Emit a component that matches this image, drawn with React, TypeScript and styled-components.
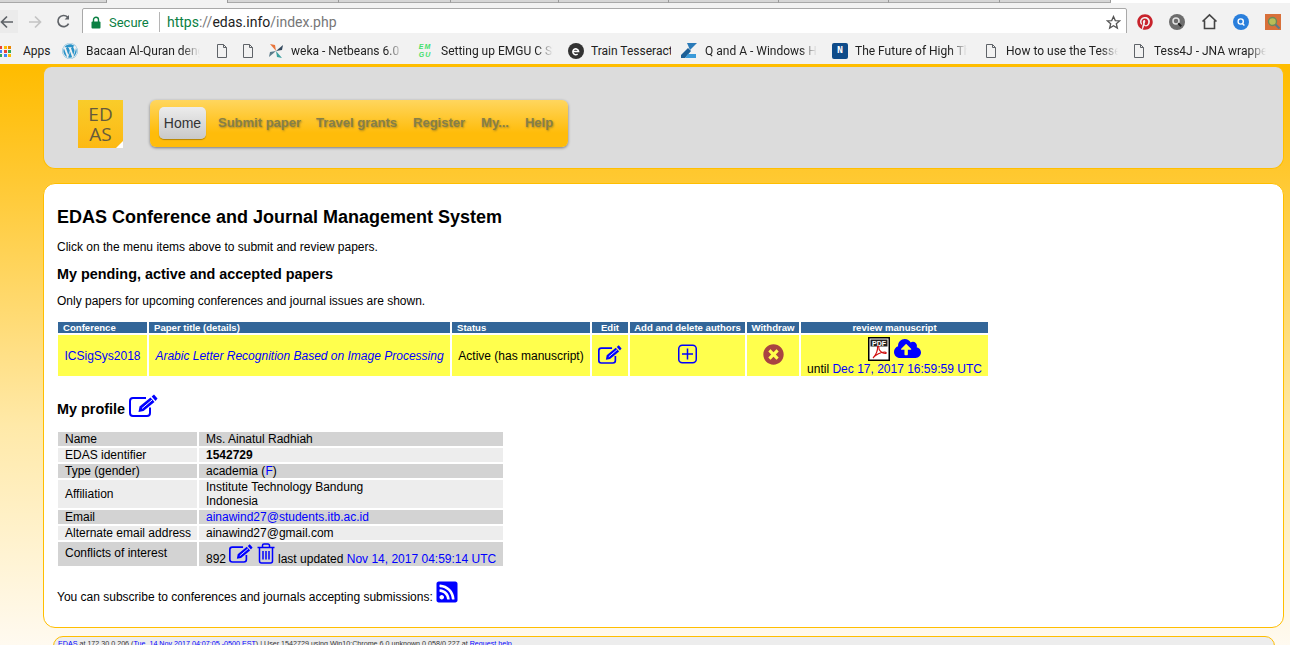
import React from 'react';
import styled, { createGlobalStyle } from 'styled-components';
import { FaTimesCircle, FaCloudUploadAlt, FaRssSquare, FaPinterest, FaWordpress } from 'react-icons/fa';

const Global = createGlobalStyle`
  html, body { margin: 0; padding: 0; height: 100%; overflow: hidden; background: #fff; }
  body { font-family: "Liberation Sans", Arial, sans-serif; font-size: 12px; color: #000; }
  * { box-sizing: border-box; }
  a { color: #0000ff; text-decoration: none; }
`;

const Shell = styled.div`
  width: 1290px; height: 645px; overflow: hidden; display: flex; flex-direction: column;
`;
const TabStrip = styled.div`
  height: 3px; display: flex; flex: none; background: #fff;
`;
const Tab = styled.div<{ $w: number; $active?: boolean }>`
  width: ${p => p.$w}px; height: 3px; flex: none;
  background: ${p => (p.$active ? '#f2f2f2' : '#d6d6d6')};
  border-right: 1px solid #9a9a9a;
  border-bottom: ${p => (p.$active ? '0' : '1px solid #a8a8a8')};
`;
const Toolbar = styled.div`
  height: 30px; flex: none; background: #f2f2f2; display: flex; align-items: center; padding-top: 7px;
`;
const NavBtn = styled.div<{ $w: number; $hover?: boolean }>`
  width: ${p => p.$w}px; height: 23px; flex: none; display: flex; align-items: center;
  justify-content: ${p => (p.$hover ? 'flex-start' : 'center')};
  background: ${p => (p.$hover ? '#ebebeb' : 'transparent')};
`;
const Address = styled.div`
  width: 1045px; height: 27px; margin-left: 8px; flex: none; background: #fff; border: 1px solid #a9a9a9; border-radius: 2px;
  display: flex; align-items: center; padding: 1px 0 0 8px; font-family: Roboto, "Open Sans", sans-serif; font-size: 14px;
`;
const Secure = styled.span`
  color: #0b8043; margin-left: 8px; width: 50px; flex: none; font-size: 13px;
`;
const Sep = styled.span`
  width: 1px; height: 20px; background: #b5b5b5; flex: none; margin-right: 7px;
`;
const UrlGreen = styled.span`color: #0b8043;`;
const UrlGray = styled.span`color: #777;`;
const UrlDark = styled.span`color: #222;`;
const StarSlot = styled.div`
  margin-left: auto; margin-right: 5px; display: flex;
`;
const Extensions = styled.div`
  display: flex; align-items: center; margin-left: 2px;
`;
const ExtSlot = styled.div`
  width: 32px; display: flex; justify-content: center; align-items: center; flex: none;
`;
const Bookmarks = styled.div`
  height: 33px; flex: none; background: #f2f2f2; display: flex; align-items: center; padding-top: 5px;
  font-family: Roboto, "Open Sans", sans-serif; font-size: 12px; color: #222;
  border-bottom: 2px solid #ffbe00;
`;
const Mark = styled.div<{ $ml: number }>`
  display: flex; align-items: center; margin-left: ${p => p.$ml}px; flex: none;
`;
const MarkIcon = styled.div<{ $w?: number; $gap?: number }>`
  width: ${p => p.$w ?? 16}px; height: 16px; flex: none; margin-right: ${p => p.$gap ?? 7}px; display: flex; align-items: center; justify-content: center;
`;
const MarkText = styled.span<{ $w: number; $fade?: boolean }>`
  width: ${p => p.$w}px; white-space: nowrap; overflow: hidden; flex: none;
  ${p => (p.$fade ? 'mask-image: linear-gradient(to right, #000 85%, transparent 100%);' : '')}
`;
const EmguLogo = styled.span`
  font: italic bold 7px/8px "Liberation Sans", sans-serif; color: #3fe06a; letter-spacing: 1px; text-align: center; width: 16px;
`;
const NBadge = styled.span`
  width: 16px; height: 16px; background: #0f4c8a; color: #fff; border-radius: 2px; font: bold 10px/16px "Liberation Mono", monospace; text-align: center;
`;
const Page = styled.div`
  flex: 1; min-height: 0; background: linear-gradient(to bottom, #ffbc00 0%, #ffc933 20%, #ffe9a8 62%, #fffaf0 100%);
  padding: 1px 6px 0 43px; overflow: hidden;
`;
const HeaderPanel = styled.div`
  height: 102px; background: #dcdcdc; border: 1px solid #ffbe00; border-top: 0; border-radius: 8px 8px 12px 12px;
  display: flex; align-items: flex-start; padding: 33px 0 0 34px;
`;
const Logo = styled.div`
  width: 45px; height: 48px; background: linear-gradient(to bottom, #f9cc2a, #fdb913); color: #655a3c; position: relative;
  font: 19px/20px "Open Sans", sans-serif; text-align: center; padding-top: 4px; flex: none;
  &::after { content: ''; position: absolute; right: 0; bottom: 0; width: 0; height: 0; border-style: solid; border-width: 0 0 7px 7px; border-color: transparent transparent #fff transparent; }
`;
const Menu = styled.div`
  margin-left: 27px; height: 47px; width: 418px; flex: none; display: flex; align-items: center; padding-left: 9px; border-radius: 6px;
  background: linear-gradient(to bottom, #ffd65e, #ffbc0a 70%);
  box-shadow: 0 1px 3px rgba(0,0,0,.45);
`;
const Home = styled.div`
  width: 47px; height: 32px; border-radius: 5px; background: linear-gradient(to bottom, #ececec, #c9c9c9);
  box-shadow: 0 1px 1px rgba(0,0,0,.3); display: flex; align-items: center; justify-content: center; font-size: 14px; color: #333; margin-right: 12px; margin-top: -1px;
`;
const MenuItem = styled.span<{ $mr: number }>`
  font-weight: bold; font-size: 13px; color: #867f48; text-shadow: 1px 1px 2px rgba(120,100,40,.6); margin-right: ${p => p.$mr}px; margin-top: -2px; white-space: nowrap;
`;
const MainPanel = styled.div`
  height: 445px; margin-top: 14px; background: #fff; border: 1px solid #ffbe00; border-radius: 12px; padding: 22px 13px 0;
`;
const Title = styled.h1`
  margin: 0 0 12px; font-size: 18px; line-height: 22px; font-weight: bold;
`;
const Para = styled.p<{ $mb?: number }>`
  margin: 0 0 ${p => p.$mb ?? 0}px; font-size: 12px; line-height: 14px;
`;
const Sub = styled.h2`
  margin: 12px 0 11px; font-size: 14.4px; line-height: 17px; font-weight: bold;
`;
const PapersTable = styled.table`
  border-collapse: separate; border-spacing: 2px; table-layout: fixed; width: 934px; margin: 0 0 0 -1px;
`;
const Th = styled.th<{ $center?: boolean }>`
  background: #336699; color: #fff; font-size: 9.6px; line-height: 11px; height: 11px; padding: 0 0 0 ${p => (p.$center ? 0 : 5)}px; text-align: ${p => (p.$center ? 'center' : 'left')}; white-space: nowrap; font-weight: bold;
`;
const Td = styled.td`
  background: #ffff4d; height: 41px; padding: 0; text-align: center; white-space: nowrap; line-height: 14px; vertical-align: middle;
`;
const Italic = styled.a`font-style: italic;`;
const IconRow = styled.div`
  display: flex; justify-content: center; align-items: flex-end; gap: 4px; height: 25px; margin-bottom: 1px;
`;
const ProfileHead = styled.h2`
  margin: 15px 0 15px; font-size: 14.4px; line-height: 24px; font-weight: bold; display: flex; align-items: flex-end; gap: 4px; height: 24px;
`;
const ProfileLabel = styled.span`position: relative; top: 4px;`;
const ProfileTable = styled.table`
  border-collapse: separate; border-spacing: 2px; table-layout: fixed; width: 449px; margin: -2px 0 0 -1px;
`;
const PCell = styled.td<{ $alt?: boolean; $h?: number; $up?: boolean }>`
  background: ${p => (p.$alt ? '#ededed' : '#d3d3d3')}; padding: ${p => (p.$up ? '0 0 2px 7px' : '0 0 0 7px')}; line-height: 14px; height: ${p => p.$h ?? 14}px; white-space: nowrap; vertical-align: middle;
`;
const CoiLine = styled.div`
  display: flex; align-items: flex-end; height: 24px; padding-bottom: 0;
`;
const CoiIcons = styled.span`
  display: inline-flex; align-items: flex-start; gap: 4px; margin: 0 3px 0 3px; height: 23px;
`;
const Subscribe = styled.div`
  margin-top: 13px; display: flex; align-items: flex-end; gap: 2px; line-height: 14px; height: 23px;
`;
const FooterBar = styled.div`
  height: 40px; margin: 8px 0 0 10px; background: #ededed; border: 1px solid #ffbe00; border-radius: 10px 10px 0 0; padding: 3px 0 0 4px;
  font-size: 7.15px; line-height: 9px; color: #333; white-space: nowrap; overflow: hidden; width: 1222px;
`;

const File = () => (
  <svg width="12" height="14" viewBox="0 0 12 14" fill="none" stroke="#5f6368" strokeWidth="1"><path d="M1.5.5h6l3 3v10h-9z" /><path d="M7.5.5v3h3" /></svg>
);

const PencilSquare = ({ w }: { w: number }) => (
  <svg width={w} height={(w * 24) / 29} viewBox="0 0 29 24">
    <path d="M21 14.500V20a3 3 0 0 1-3 3H4a3 3 0 0 1-3-3V8a3 3 0 0 1 3-3h13" fill="none" stroke="#0000ff" strokeWidth="2" />
    <path d="M9.500 19l1-5.500 11-9 4 4.500-11 9z" fill="#0000ff" />
    <path d="M22.700 3.500 25 1.500l3.500 4-2 2.500z" fill="#0000ff" />
    <path d="M13 15.500 23 7" stroke="#fff" strokeWidth="1" />
  </svg>
);

const TrashOutline = () => (
  <svg width="18" height="21" viewBox="0 0 18 21" fill="none" stroke="#0000ff" strokeWidth="1.5">
    <path d="M0.500 4.500h17M5.500 4.500V2.500a1.500 1.500 0 0 1 1.500-1.500h4a1.500 1.500 0 0 1 1.500 1.500v2" />
    <path d="M2.500 4.500V18a2 2 0 0 0 2 2h9a2 2 0 0 0 2-2V4.500" />
    <path d="M6 8v8.500M9 8v8.500M12 8v8.500" />
  </svg>
);

const App = () => {
  const tabs = [107, 121, 111, 112, 108, 110, 110, 110, 111, 111];
  return (
    <Shell>
      <Global />
      <TabStrip>
        {tabs.map((w, i) => <Tab key={i} $w={w} $active={i === 1} />)}
      </TabStrip>
      <Toolbar>
        <NavBtn $w={18} $hover>
          <svg width="14" height="14" viewBox="0 0 14 14" fill="none" stroke="#5f6368" strokeWidth="1.7"><path d="M13 7H1.500M7 1.500 1.500 7 7 12.500" /></svg>
        </NavBtn>
        <NavBtn $w={34}>
          <svg width="14" height="14" viewBox="0 0 14 14" fill="none" stroke="#c4c4c4" strokeWidth="1.7"><path d="M1 7h11.500M7 1.500 12.500 7 7 12.500" /></svg>
        </NavBtn>
        <NavBtn $w={22}>
          <svg width="15" height="15" viewBox="0 0 15 15" fill="none" stroke="#5f6368" strokeWidth="1.7"><path d="M12.600 9.600A5.600 5.600 0 1 1 11.600 3.200" /><path d="M13 1v4.400H8.600z" fill="#5f6368" stroke="none" /></svg>
        </NavBtn>
        <Address>
          <svg width="10" height="13" viewBox="0 0 10 13"><path d="M2.500 6V3.800a2.500 2.500 0 0 1 5 0V6" fill="none" stroke="#0b8043" strokeWidth="1.4" /><rect x="0.500" y="5.500" width="9" height="7" rx="1" fill="#0b8043" /></svg>
          <Secure>Secure</Secure>
          <Sep />
          <span><UrlGreen>https</UrlGreen><UrlGray>://</UrlGray><UrlDark>edas.info</UrlDark><UrlGray>/index.php</UrlGray></span>
          <StarSlot>
            <svg width="15" height="15" viewBox="0 0 16 16" fill="none" stroke="#555" strokeWidth="1.4"><path d="m8 1.600 1.900 4.300 4.600.4-3.500 3 1.100 4.600L8 11.400l-4.100 2.500L5 9.300 1.500 6.300l4.600-.4z" /></svg>
          </StarSlot>
        </Address>
        <Extensions>
          <ExtSlot><FaPinterest size={16} color="#c8232c" /></ExtSlot>
          <ExtSlot>
            <svg width="16" height="16" viewBox="0 0 16 16"><circle cx="8" cy="8" r="8" fill="#6d6d6d" /><circle cx="7" cy="7" r="3" fill="none" stroke="#e4e4e4" strokeWidth="1.5" /><path d="m9.200 9.200 3 3" stroke="#222" strokeWidth="2" /></svg>
          </ExtSlot>
          <ExtSlot>
            <svg width="17" height="17" viewBox="0 0 17 17" fill="none" stroke="#444" strokeWidth="1.6"><path d="M1.500 8.500 8.500 1.800l7 6.700M3.500 7.500v8h10v-8" /></svg>
          </ExtSlot>
          <ExtSlot>
            <svg width="16" height="16" viewBox="0 0 16 16"><circle cx="8" cy="8" r="8" fill="#2a7fdc" /><circle cx="7.700" cy="7.500" r="2.600" fill="none" stroke="#fff" strokeWidth="1.4" /><path d="m9.400 9.400 2 2" stroke="#fff" strokeWidth="1.4" /></svg>
          </ExtSlot>
          <ExtSlot>
            <svg width="16" height="16" viewBox="0 0 16 16"><rect width="16" height="16" fill="#d8703a" /><circle cx="7.500" cy="7.500" r="4" fill="#b8bd58" stroke="#6a8a5a" strokeWidth="1.4" /><path d="m10.500 10.500 4 4" stroke="#5a7a8a" strokeWidth="2" /></svg>
          </ExtSlot>
        </Extensions>
      </Toolbar>
      <Bookmarks>
        <Mark $ml={0}>
          <MarkIcon $w={11} $gap={12}>
            <svg width="11" height="11" viewBox="0 0 11 11">
              <rect x="-1" y="0" width="3" height="3" fill="#e94235" /><rect x="4" y="0" width="3" height="3" fill="#fbbc04" /><rect x="8" y="0" width="3" height="3" fill="#ea8600" />
              <rect x="-1" y="4" width="3" height="3" fill="#4285f4" /><rect x="4" y="4" width="3" height="3" fill="#e94235" /><rect x="8" y="4" width="3" height="3" fill="#34a853" />
              <rect x="-1" y="8" width="3" height="3" fill="#34a853" /><rect x="4" y="8" width="3" height="3" fill="#4285f4" /><rect x="8" y="8" width="3" height="3" fill="#fbbc04" />
            </svg>
          </MarkIcon>
          <MarkText $w={28}>Apps</MarkText>
        </Mark>
        <Mark $ml={11}>
          <MarkIcon $gap={8}><FaWordpress size={16} color="#2a93c9" /></MarkIcon>
          <MarkText $w={114} $fade>Bacaan Al-Quran dengan</MarkText>
        </Mark>
        <Mark $ml={16}><MarkIcon $w={12} $gap={0}><File /></MarkIcon></Mark>
        <Mark $ml={14}><MarkIcon $w={12} $gap={0}><File /></MarkIcon></Mark>
        <Mark $ml={14}>
          <MarkIcon $gap={7}>
            <svg width="16" height="16" viewBox="0 0 16 16"><path d="M8 8 2 1l5 1z" fill="#e8743b" /><path d="M8 8l7-6-1 5z" fill="#34495e" /><path d="M8 8l6 7-5-1z" fill="#3aa0a0" /><path d="M8 8l-7 6 1-5z" fill="#5a7a8a" /></svg>
          </MarkIcon>
          <MarkText $w={112} $fade>weka - Netbeans 6.0 (Open</MarkText>
        </Mark>
        <Mark $ml={14}>
          <MarkIcon $gap={8}><EmguLogo>EM GU</EmguLogo></MarkIcon>
          <MarkText $w={112} $fade>Setting up EMGU C Sharp</MarkText>
        </Mark>
        <Mark $ml={15}>
          <MarkIcon $gap={7}>
            <svg width="16" height="16" viewBox="0 0 16 16"><circle cx="8" cy="8" r="8" fill="#333" /><path d="M5 8.400h5.600a2.900 2.900 0 1 0-1 2.600" fill="none" stroke="#fff" strokeWidth="1.5" /></svg>
          </MarkIcon>
          <MarkText $w={80}>Train Tesseract</MarkText>
        </Mark>
        <Mark $ml={10}>
          <MarkIcon $gap={8}>
            <svg width="16" height="16" viewBox="0 0 16 16"><path d="M6 0h10L9 7z" fill="#2a7ab8" /><path d="M0 12 7 5l3 3-6 7H0z" fill="#1d5f96" /><path d="M7 11h8v4H4z" fill="#3a9ad9" /></svg>
          </MarkIcon>
          <MarkText $w={112} $fade>Q and A - Windows Help</MarkText>
        </Mark>
        <Mark $ml={15}>
          <MarkIcon $gap={7}><NBadge>N</NBadge></MarkIcon>
          <MarkText $w={112} $fade>The Future of High Throughput</MarkText>
        </Mark>
        <Mark $ml={18}>
          <MarkIcon $w={12} $gap={9}><File /></MarkIcon>
          <MarkText $w={112} $fade>How to use the Tesseract API</MarkText>
        </Mark>
        <Mark $ml={15}>
          <MarkIcon $w={12} $gap={9}><File /></MarkIcon>
          <MarkText $w={112} $fade>Tess4J - JNA wrapper for</MarkText>
        </Mark>
      </Bookmarks>
      <Page>
        <HeaderPanel>
          <Logo>ED<br />AS</Logo>
          <Menu>
            <Home>Home</Home>
            <MenuItem $mr={15}>Submit paper</MenuItem>
            <MenuItem $mr={16}>Travel grants</MenuItem>
            <MenuItem $mr={16}>Register</MenuItem>
            <MenuItem $mr={16}>My...</MenuItem>
            <MenuItem $mr={0}>Help</MenuItem>
          </Menu>
        </HeaderPanel>
        <MainPanel>
          <Title>EDAS Conference and Journal Management System</Title>
          <Para>Click on the menu items above to submit and review papers.</Para>
          <Sub>My pending, active and accepted papers</Sub>
          <Para $mb={12}>Only papers for upcoming conferences and journal issues are shown.</Para>
          <PapersTable>
            <colgroup>
              <col style={{ width: 89 }} /><col style={{ width: 301 }} /><col style={{ width: 138 }} /><col style={{ width: 36 }} /><col style={{ width: 115 }} /><col style={{ width: 52 }} /><col style={{ width: 187 }} />
            </colgroup>
            <thead>
              <tr>
                <Th>Conference</Th>
                <Th>Paper title (details)</Th>
                <Th>Status</Th>
                <Th $center>Edit</Th>
                <Th $center>Add and delete authors</Th>
                <Th $center>Withdraw</Th>
                <Th $center>review manuscript</Th>
              </tr>
            </thead>
            <tbody>
              <tr>
                <Td><a href="#c">ICSigSys2018</a></Td>
                <Td><Italic href="#p">Arabic Letter Recognition Based on Image Processing</Italic></Td>
                <Td>Active (has manuscript)</Td>
                <Td><PencilSquare w={24} /></Td>
                <Td>
                  <svg width="19" height="20" viewBox="0 0 19 20" fill="none" stroke="#0000ff" strokeWidth="1.5"><rect x="0.750" y="1.200" width="17.500" height="17.600" rx="3.500" /><path d="M9.500 4.500v11M4 10h11" /></svg>
                </Td>
                <Td><FaTimesCircle size={21} color="#a94442" /></Td>
                <Td>
                  <IconRow>
                    <svg width="22" height="24" viewBox="0 0 22 24">
                      <rect x="0.750" y="0.750" width="20.500" height="22.500" fill="#fff" stroke="#000" strokeWidth="1.500" />
                      <rect x="2.500" y="2.500" width="17" height="7" fill="#222" />
                      <text x="11" y="8.500" fontSize="7" fontWeight="bold" textAnchor="middle" fill="#fff" fontFamily="Liberation Sans, sans-serif">PDF</text>
                      <path d="M5 21c3-3 5-8 4.500-11 0-1.500 1.500-1 1.300.5-.3 2.500 3 6 6.500 6 1.500 0 1.200-1.500-.8-1.500-3.500 0-9 3-11 5.500z" fill="none" stroke="#d01010" strokeWidth="1.100" />
                    </svg>
                    <FaCloudUploadAlt size={27} color="#0000ff" style={{ marginBottom: -1 }} />
                  </IconRow>
                  until <a href="#d">Dec 17, 2017 16:59:59 UTC</a>
                </Td>
              </tr>
            </tbody>
          </PapersTable>
          <ProfileHead>
            <ProfileLabel>My profile</ProfileLabel>
            <PencilSquare w={29} />
          </ProfileHead>
          <ProfileTable>
            <colgroup><col style={{ width: 139 }} /><col style={{ width: 304 }} /></colgroup>
            <tbody>
              <tr><PCell>Name</PCell><PCell>Ms. Ainatul Radhiah</PCell></tr>
              <tr><PCell $alt>EDAS identifier</PCell><PCell $alt><b>1542729</b></PCell></tr>
              <tr><PCell>Type (gender)</PCell><PCell>academia (<a href="#f">F</a>)</PCell></tr>
              <tr><PCell $alt $h={28}>Affiliation</PCell><PCell $alt $h={28}>Institute Technology Bandung<br />Indonesia</PCell></tr>
              <tr><PCell>Email</PCell><PCell><a href="#m">ainawind27@students.itb.ac.id</a></PCell></tr>
              <tr><PCell $alt>Alternate email address</PCell><PCell $alt>ainawind27@gmail.com</PCell></tr>
              <tr>
                <PCell $h={24} $up>Conflicts of interest</PCell>
                <PCell $h={24}>
                  <CoiLine>
                    892
                    <CoiIcons>
                      <PencilSquare w={24} />
                      <TrashOutline />
                    </CoiIcons>
                    last updated&nbsp;<a href="#u">Nov 14, 2017 04:59:14 UTC</a>
                  </CoiLine>
                </PCell>
              </tr>
            </tbody>
          </ProfileTable>
          <Subscribe>
            You can subscribe to conferences and journals accepting submissions:
            <FaRssSquare size={24} color="#0000ff" />
          </Subscribe>
        </MainPanel>
        <FooterBar>
          <a href="#e">EDAS</a> at 172.30.0.206 (<a href="#t">Tue, 14 Nov 2017 04:07:05 -0500 EST</a>) | User 1542729 using Win10:Chrome 6.0 unknown 0.058/0.227 at <a href="#h">Request help</a>
        </FooterBar>
      </Page>
    </Shell>
  );
};

export default App;
